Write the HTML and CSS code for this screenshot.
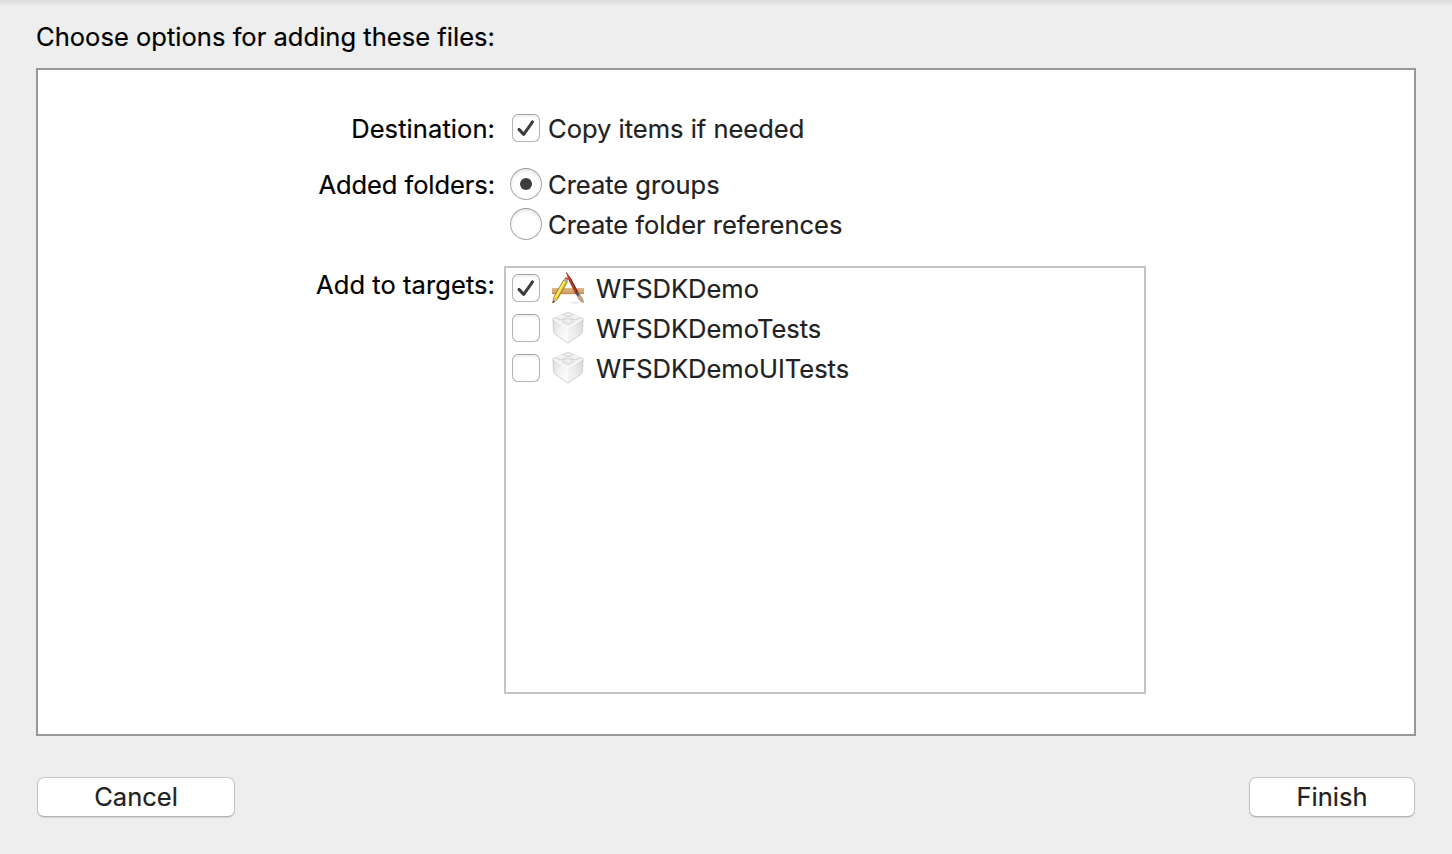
FILE: index.html
```html
<!DOCTYPE html>
<html lang="en">
<head>
<meta charset="utf-8">
<title>Add files</title>
<link rel="stylesheet" href="styles.css">
</head>
<body>
<svg class="defs" width="0" height="0" aria-hidden="true">
  <defs>
    <linearGradient id="left-face" x1="0" y1="0" x2="1" y2=".7"><stop offset="0" stop-color="#dcdcdc"/><stop offset=".5" stop-color="#f0f0f0"/><stop offset="1" stop-color="#fcfcfc"/></linearGradient>
    <linearGradient id="right-face" x1="1" y1="0" x2="0" y2=".7"><stop offset="0" stop-color="#d2d2d2"/><stop offset=".5" stop-color="#e9e9e9"/><stop offset="1" stop-color="#f3f3f3"/></linearGradient>
    <linearGradient id="wood" x1="0" y1="0" x2="0" y2="1"><stop offset="0" stop-color="#e4be8f"/><stop offset="1" stop-color="#c9965f"/></linearGradient>
    <symbol id="brick" viewBox="0 0 34 34">
      <path d="M1.8 7.6 17 16.3V32.2L4 23.2Q2.8 22.3 2.7 20.5Z" fill="url(#left-face)"/>
      <path d="M32.2 7.6 17 16.3V32.2L30 23.2Q31.2 22.3 31.3 20.5Z" fill="url(#right-face)"/>
      <path d="M1.8 7.4 16 2Q17 1.7 18 2L32.2 7.4 17 16.3Z" fill="#ededed"/>
      <path d="M1.8 7.4 16 2Q17 1.7 18 2L32.2 7.4 31.3 20.5Q31.2 22.3 30 23.2L17 32.2 4 23.2Q2.8 22.3 2.7 20.5Z" fill="none" stroke="#c6c6c6" stroke-width=".8"/>
      <path d="M2.4 8.2 17 16.5 31.6 8.2" fill="none" stroke="#fff" stroke-width="1"/>
      <g fill="#f1f1f1">
        <path d="M12.8 2.8V4.4Q17 6.6 21.2 4.4V2.8"/><ellipse cx="17" cy="2.8" rx="4.2" ry="1.3"/>
        <path d="M5.2 5.5V7.3Q9.5 9.8 13.8 7.3V5.5"/><ellipse cx="9.5" cy="5.5" rx="4.3" ry="1.5"/>
        <path d="M20.2 5.5V7.3Q24.5 9.8 28.8 7.3V5.5"/><ellipse cx="24.5" cy="5.5" rx="4.3" ry="1.5"/>
        <path d="M12.2 9V11Q17 14 21.8 11V9"/><ellipse cx="17" cy="9" rx="4.8" ry="1.7"/>
      </g>
      <g fill="none" stroke="#cacaca" stroke-width=".8">
        <path d="M12.8 4.4Q17 6.6 21.2 4.4M5.2 7.3Q9.5 9.8 13.8 7.3M20.2 7.3Q24.5 9.8 28.8 7.3M12.2 9V11Q17 14 21.8 11V9"/>
        <path d="M12.2 9Q17 6 21.8 9M12.8 2.8Q17 .4 21.2 2.8"/>
      </g>
    </symbol>
  </defs>
</svg>
<main class="sheet">
  <h1 class="title">Choose options for adding these files:</h1>
  <section class="panel">
    <div class="row destination">
      <div class="label dest-label">Destination:</div>
      <label class="option"><span class="control"><span class="box"><svg viewBox="0 0 28 28"><path d="M7 15.4 11.7 20.4 20.5 7.8"/></svg></span></span><span>Copy items if needed</span></label>
    </div>
    <div class="row folders">
      <div class="label folders-label">Added folders:</div>
      <div>
        <label class="option"><span class="control"><span class="radio on"></span></span><span>Create groups</span></label>
        <label class="option"><span class="control"><span class="radio"></span></span><span>Create folder references</span></label>
      </div>
    </div>
    <div class="row targets">
      <div class="label targets-label">Add to targets:</div>
      <div class="list">
        <label class="target"><span class="box"><svg viewBox="0 0 28 28"><path d="M7 15.4 11.7 20.4 20.5 7.8"/></svg></span>
          <svg class="icon" viewBox="0 0 34 34">
            <ellipse cx="25" cy="31.8" rx="6" ry=".7" fill="#e4e4e4"/>
            <path d="M1 17H33V23H1Z" fill="url(#wood)"/>
            <path d="M1 22.8H33" stroke="#b88452" stroke-width=".6"/>
            <path d="M3 17.5v2M6 17.5v2M9 17.5v2M12 17.5v2M15 17.5v2M18 17.5v2M21 17.5v2M24 17.5v2M27 17.5v2M30 17.5v2" stroke="#c08c5a" stroke-width=".5"/>
            <path d="M15.8 1.4Q15 .8 15.3 2.2L17.6 9 24.4 22.7 27.3 21.1 20.6 8.2Z" fill="#862216"/>
            <path d="M16.2 2.8 24.8 21" stroke="#cb5136" stroke-width="1"/>
            <path d="M24.4 22.4 27.3 20.9 29 24.2 26.4 25.6Z" fill="#535763"/>
            <path d="M26.4 25.5 29 24Q32.6 28.2 32.6 31.7 28.4 30.6 26.4 25.5Z" fill="#c9a18a" stroke="#9a735e" stroke-width=".5"/>
            <path d="M12.6 9 16.3 11 6.2 28.6 1.8 32 2.6 26.5Z" fill="#f2d936" stroke="#766121" stroke-width=".7"/>
            <path d="M13.6 10.1 4.2 26.5" stroke="#fff38a" stroke-width="1"/>
            <path d="M15.5 11.4 6 28" stroke="#b38c18" stroke-width=".8"/>
            <path d="M2.6 26.5 6.2 28.6 1.8 32Z" fill="#dcb578"/><path d="M2.1 29.6 3.9 30.5 1.6 32.2Z" fill="#333"/>
            <path d="M12.6 9 13.4 7.6 17.1 9.6 16.3 11Z" fill="#a8b0b4"/>
            <path d="M13.4 7.6Q14.6 5.6 16.5 6.5 18.2 7.5 17.1 9.6Z" fill="#dc4f4a"/>
          </svg><span class="name">WFSDKDemo</span></label>
        <label class="target"><span class="box"></span><svg class="icon"><use href="#brick"/></svg><span class="name">WFSDKDemoTests</span></label>
        <label class="target"><span class="box"></span><svg class="icon"><use href="#brick"/></svg><span class="name">WFSDKDemoUITests</span></label>
      </div>
    </div>
  </section>
  <footer class="actions">
    <button class="button cancel">Cancel</button>
    <button class="button finish">Finish</button>
  </footer>
</main>
</body>
</html>
```
FILE: styles.css
```css
* { box-sizing: border-box; }
body { margin: 0; background: #eee; font: 25.5px/40px Inter, "Liberation Sans", sans-serif; color: #000; -webkit-text-stroke: .2px; }
.defs { display: block; }
.sheet { height: 854px; padding: 17px 36px 0; background: linear-gradient(#dcdcdc 0, #dedede 2px, #e7e7e7 4px, #eee 6px); overflow: hidden; white-space: nowrap; }
.title { margin: 0; height: 51px; font: inherit; letter-spacing: .03px; }
.panel { height: 668px; border: 2px solid #989898; background: #fff; padding-top: 39px; }
.row { display: grid; grid-template-columns: 457px 1fr; }
.label { text-align: right; }
.dest-label { letter-spacing: .08px; }
.folders-label { letter-spacing: -.07px; }
.targets-label { letter-spacing: .07px; }
.destination { margin-bottom: 16px; }
.folders { margin-bottom: 20px; }
.targets { grid-template-columns: 457px 642px; column-gap: 9px; }
.option { display: flex; align-items: flex-start; height: 40px; color: #222; }
.control { width: 53px; height: 38px; padding-left: 15px; display: flex; align-items: center; flex: none; }
.option .box { margin-left: 2px; }
.box { width: 28px; height: 28px; flex: none; border: 1px solid #b5b5b5; border-top-color: #a5a5a5; border-radius: 6px; background: #fff; box-shadow: inset 0 2px 2px #eee; }
.box svg { display: block; width: 28px; height: 28px; margin: -1px; fill: none; stroke: #3d3d3d; stroke-width: 3; stroke-linecap: round; stroke-linejoin: round; }
.radio { width: 32px; height: 32px; border: 1px solid #aaa; border-top-color: #999; border-radius: 50%; box-shadow: inset 0 2px 3px #e5e5e5; display: grid; place-items: center; }
.radio.on::after { content: ""; width: 12px; height: 12px; border-radius: 50%; background: #3d3d3d; }
.list { height: 428px; margin-top: 1px; border: 2px solid #c4c4c4; color: #222; }
.target { height: 40px; display: flex; align-items: center; padding-left: 6px; }
.icon { width: 34px; height: 34px; margin: 0 11px; flex: none; display: block; }
.name { padding-top: 2px; }
.actions { display: flex; justify-content: space-between; padding: 41px 1px 0; }
.button { height: 40px; padding: 0; border: 1px solid #c6c6c6; border-bottom-color: #b3b3b3; border-radius: 7px; background: #fff; color: #222; font: inherit; line-height: 38px; box-shadow: 0 1px 1px #d4d4d4; -webkit-text-stroke: .2px; }
.cancel { width: 198px; }
.finish { width: 166px; }
```
